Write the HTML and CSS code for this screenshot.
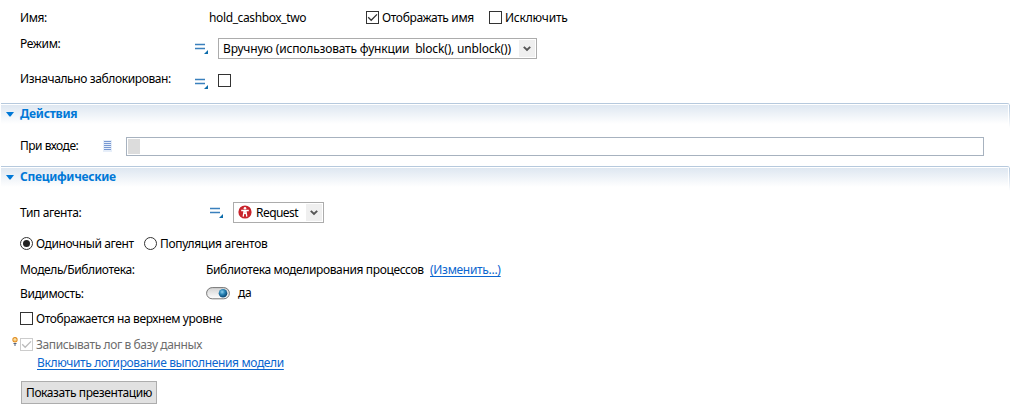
FILE: index.html
```html
<!DOCTYPE html>
<html lang="ru">
<head>
<meta charset="utf-8">
<title>Свойства</title>
<link rel="stylesheet" href="styles.css">
</head>
<body>
<svg class="defs" width="0" height="0">
  <defs>
    <symbol id="mode" viewBox="0 0 14 12">
      <path d="M0 1.500h10M0 5.500h10" stroke="#3a80bd" stroke-width="1.300"/>
      <path d="M13 7v4H9z" fill="#0d6cab"/>
    </symbol>
    <symbol id="tick" viewBox="0 0 13 13">
      <path d="M2.200 6.300l3 3L11 3.400" fill="none" stroke="currentColor" stroke-width="1.300"/>
    </symbol>
    <symbol id="chevron" viewBox="0 0 8 6">
      <path d="M.8 .8L4 4l3.200-3.200" fill="none" stroke="#555" stroke-width="1.900"/>
    </symbol>
    <linearGradient id="pill" x1="0" y1="0" x2="0" y2="1">
      <stop offset="0" stop-color="#d2d2d2"/><stop offset="1" stop-color="#fff"/>
    </linearGradient>
    <radialGradient id="knob" cx=".4" cy=".35" r=".6">
      <stop offset="0" stop-color="#8fd0ee"/><stop offset=".5" stop-color="#2b86b8"/><stop offset="1" stop-color="#0f4f7c"/>
    </radialGradient>
  </defs>
</svg>
<main class="panel">
  <div class="row row-name">
    <span class="label w189"><span class="t-name">Имя:</span></span>
    <span class="w157 t-hold">hold_cashbox_two</span>
    <span class="box"><svg width="13" height="13"><use href="#tick"/></svg></span>
    <span class="option w107 t-show">Отображать имя</span>
    <span class="box"></span>
    <span class="option t-excl">Исключить</span>
  </div>
  <div class="row row-mode">
    <span class="label label-up w175"><span class="t-mode">Режим:</span></span>
    <svg class="mode" width="14" height="12"><use href="#mode"/></svg>
    <span class="select select-mode"><span class="t-manual">Вручную (использовать функции&nbsp; block(), unblock())</span><span class="arrow"><svg width="8" height="6"><use href="#chevron"/></svg></span></span>
  </div>
  <div class="row row-lock">
    <span class="label label-raise w175"><span class="t-lock">Изначально заблокирован:</span></span>
    <svg class="mode mode-low" width="14" height="12"><use href="#mode"/></svg>
    <span class="box box-lock"></span>
  </div>
  <h2 class="section"><svg class="twisty" width="8" height="5"><path d="M0 0h8L4.500 4.500h-1z" fill="#0078d7"/></svg><span class="t-act">Действия</span></h2>
  <div class="row row-enter">
    <span class="label w83"><span class="t-enter">При входе:</span></span>
    <svg class="lines" width="9" height="12"><path d="M0 0h9v12H0z" fill="#e6eef9"/><path d="M1 1.500h7M1 3.500h7M1 5.500h7M1 7.500h7M1 9.500h7" stroke="#7898d2"/></svg>
    <span class="code"><span class="gutter"></span></span>
  </div>
  <h2 class="section"><svg class="twisty" width="8" height="5"><path d="M0 0h8L4.500 4.500h-1z" fill="#0078d7"/></svg><span class="t-spec">Специфические</span></h2>
  <div class="row row-type">
    <span class="label w190"><span class="t-type">Тип агента:</span></span>
    <svg class="mode" width="14" height="12"><use href="#mode"/></svg>
    <span class="select select-type">
      <svg class="agent" width="14" height="14"><circle cx="7" cy="7" r="6.600" fill="#c9232b"/><circle cx="7" cy="3.200" r="1.300" fill="#fff"/><path d="M3.200 5.500h7.600M7 5v3" stroke="#fff" stroke-width="1.500"/><path d="M5.200 11.600L6.100 6h1.800l.9 5.600M7 8v1" fill="none" stroke="#fff" stroke-width="1.300"/></svg>
      <span class="t-req">Request</span><span class="arrow"><svg width="8" height="6"><use href="#chevron"/></svg></span>
    </span>
  </div>
  <div class="row row-radio">
    <span class="radio radio-on"></span><span class="option w108 t-single">Одиночный агент</span>
    <span class="radio"></span><span class="option t-pop">Популяция агентов</span>
  </div>
  <div class="row row-model">
    <span class="label w186"><span class="t-model">Модель/Библиотека:</span></span>
    <span class="w224 t-lib">Библиотека моделирования процессов</span>
    <a class="link t-change">(Изменить...)</a>
  </div>
  <div class="row row-visible">
    <span class="label label-drop w186"><span class="t-vis">Видимость:</span></span>
    <svg width="24" height="13"><rect x=".6" y=".6" width="22.800" height="11.200" rx="5.600" fill="url(#pill)" stroke="#777"/><circle cx="17" cy="6.200" r="4.300" fill="url(#knob)"/></svg>
    <span class="yes t-yes">да</span>
  </div>
  <div class="row row-top">
    <span class="box"></span><span class="option t-top">Отображается на верхнем уровне</span>
  </div>
  <div class="row row-log">
    <svg class="bulb" width="6" height="9"><circle cx="3" cy="2.700" r="2.100" fill="#fff3c4" stroke="#e08a1c" stroke-width="1.100"/><path d="M3 2.500v3" stroke="#eda43c"/><path d="M1.500 6.500h3M2 8h2" stroke="#51617c"/></svg>
    <span class="box box-off"><svg width="13" height="13"><use href="#tick"/></svg></span><span class="option off t-log">Записывать лог в базу данных</span>
  </div>
  <div class="row row-enable"><a class="link t-enable">Включить логирование выполнения модели</a></div>
  <button class="button"><span class="t-button">Показать презентацию</span></button>
</main>
</body>
</html>
```
FILE: styles.css
```css
* { box-sizing: border-box; }
body { margin: 0; background: #fff; color: #000; font: 12px/16px "Noto Sans", "Open Sans", sans-serif; }
.defs { position: absolute; }
.panel { display: flex; flex-direction: column; width: 1011px; height: 414px; overflow: hidden; }
.row { display: flex; align-items: center; flex: none; padding-left: 20px; white-space: nowrap; }
.row > *, .select > * { flex: none; }
svg { display: block; }
.w83 { width: 83px; }
.w107 { width: 107px; }
.w108 { width: 108px; }
.w157 { width: 157px; }
.w175 { width: 175px; }
.w186 { width: 186px; }
.w189 { width: 189px; }
.w190 { width: 190px; }
.w224 { width: 224px; }
.row-name { height: 20px; margin-top: 8px; }
.row-mode { height: 21px; margin-top: 10px; }
.row-lock { height: 20px; margin-top: 11px; }
.row-enter { height: 20px; margin-top: 12px; margin-bottom: 10px; }
.row-type { height: 21px; margin-top: 15px; }
.row-radio { height: 20px; margin-top: 11px; }
.row-model { height: 20px; margin-top: 6px; }
.row-visible { height: 20px; margin-top: 3px; }
.row-top { height: 20px; margin-top: 6px; }
.row-log { height: 20px; margin-top: 6px; padding-left: 12px; }
.row-enable { height: 16px; padding-left: 37px; }
.label-up { align-self: flex-start; margin-top: -2px; }
.label-raise { margin-bottom: 2px; }
.label-drop { margin-top: 2px; }
.mode { margin-right: 9px; }
.mode-low { margin-top: 7px; }
.box { width: 13px; height: 13px; margin-bottom: 1px; border: 1px solid #333; color: #333; }
.box svg { margin: -1px; }
.box-lock { margin-top: 1px; margin-bottom: 0; }
.box-off { margin-left: 8px; border-color: #ccc; color: #bbb; }
.option { margin-left: 3px; }
.off { color: #6d6d6d; }
.select { display: flex; align-items: center; height: 21px; border: 1px solid #acacac; padding: 0 1px 0 4px; }
.select-mode { width: 319px; }
.select-type { width: 91px; }
.agent { margin-right: 4px; margin-bottom: 1px; }
.arrow { margin-left: auto; width: 16px; height: 17px; background: #efefef; display: grid; place-items: center; }
.section { flex: none; position: relative; display: flex; align-items: center; width: 1009px; height: 21px; margin: 13px 0 0 1px; padding: 0 0 0 5px; border-top: 1px solid #b6c9dd; border-top-right-radius: 3px; background: linear-gradient(#fff 1px, #dee7f1 1px, #fff 20px); color: #0078d7; font-size: 12px; line-height: 16px; }
.section::after { content: ""; position: absolute; right: 0; top: 1px; width: 2px; height: 23px; background: linear-gradient(#b6c9dd, #fff) right / 1px 100% no-repeat, #fff; }
.row-enter + .section { margin-top: 0; }
.twisty { margin-right: 6px; }
.lines { margin-right: 14px; }
.code { width: 858px; height: 19px; margin-top: 1px; border: 1px solid #a7b2bf; padding: 1px 0 1px 1px; }
.gutter { display: block; width: 12px; height: 15px; background: #dcdcdc; }
.radio { width: 13px; height: 13px; margin-bottom: 1px; border: 1px solid #333; border-radius: 50%; display: grid; place-items: center; }
.radio-on::before { content: ""; width: 7px; height: 7px; border-radius: 50%; background: #222; }
.link { color: #0b66cf; text-decoration: underline; text-underline-offset: 2px; }
.yes { margin-left: 8px; }
.bulb { margin-right: -6px; margin-top: -7px; }
.button { flex: none; width: 136px; height: 23px; margin: 10px 0 0 21px; padding: 0; border: 1px solid #adadad; background: #e1e1e1; color: #000; font: inherit; white-space: nowrap; }

.t-name, .t-vis, .t-single, .t-button { letter-spacing: -.4px; }
.t-mode, .t-lib, .t-show, .t-type, .t-enable { letter-spacing: -.36px; }
.t-lock, .t-hold, .t-model, .t-top { letter-spacing: -.38px; }
.t-excl { letter-spacing: -.2px; }
.t-manual { letter-spacing: -.17px; }
.t-act { letter-spacing: -.25px; }
.t-enter { letter-spacing: -.5px; }
.t-spec, .t-pop, .t-change, .t-yes { letter-spacing: -.3px; }
.t-req { letter-spacing: -.55px; }
.t-log { letter-spacing: -.4px; }
```
